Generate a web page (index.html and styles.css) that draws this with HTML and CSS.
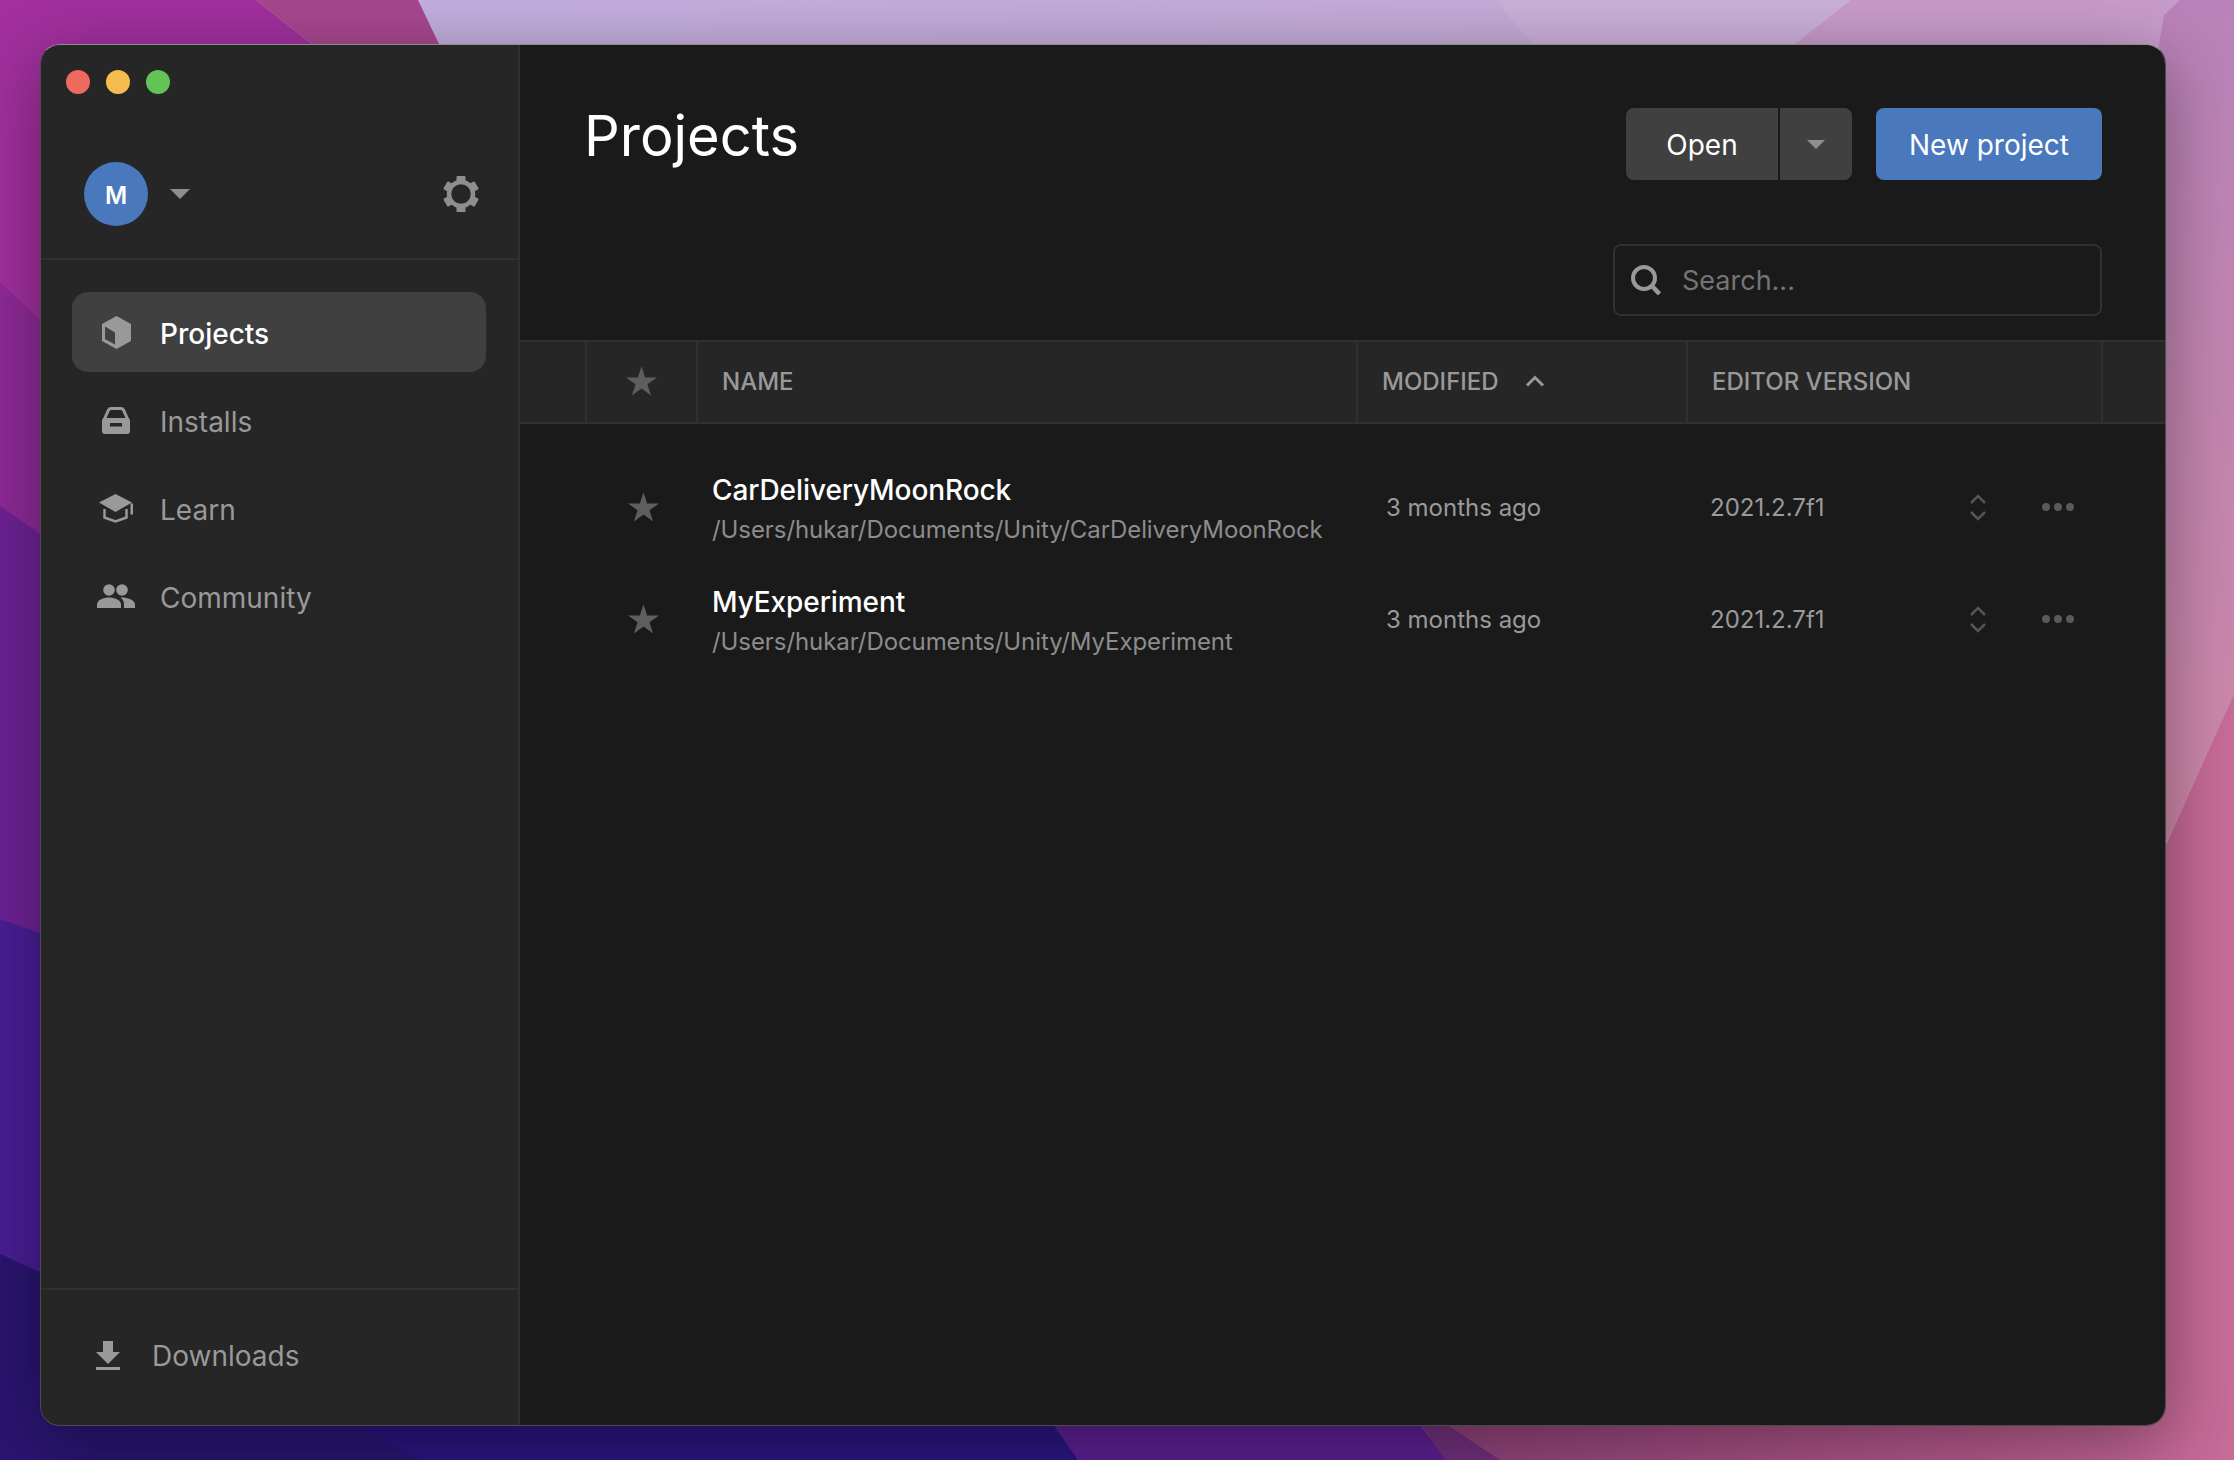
FILE: index.html
```html
<!DOCTYPE html>
<html lang="en">
<head>
    <meta charset="UTF-8">
    <title>Unity Hub</title>
    <link rel="stylesheet" href="styles.css">
</head>
<body>
    <!-- desktop wallpaper -->
    <svg class="wallpaper" viewBox="0 0 2234 1460" preserveAspectRatio="none" aria-hidden="true">
        <defs>
            <linearGradient id="wpLav" x1="0" x2="1" y1="0" y2="0.1"><stop offset="0" stop-color="#c2b0e2"/><stop offset="1" stop-color="#c6a8d2"/></linearGradient>
            <linearGradient id="wpMauve" x1="0" x2="0" y1="0" y2="1"><stop offset="0" stop-color="#b983b9"/><stop offset="1" stop-color="#cf88a8"/></linearGradient>
            <linearGradient id="wpPink" x1="0" x2="1" y1="0" y2="0"><stop offset="0" stop-color="#8c4078"/><stop offset="0.7" stop-color="#b65a8c"/><stop offset="1" stop-color="#c86c98"/></linearGradient>
        </defs>
        <rect width="2234" height="1460" fill="url(#wpLav)"/>
        <polygon points="1496,0 1851,0 1795,44 1532,44" fill="#cbb0d9"/>
        <polygon points="1851,0 2234,0 2234,800 1700,800 1795,44" fill="#c89cca"/>
        <polygon points="2180,0 2234,0 2234,694 2167,843 2100,400 2164,15" fill="url(#wpMauve)"/>
        <polygon points="2234,694 2167,843 1400,1460 2234,1460" fill="url(#wpPink)"/>
        <polygon points="0,0 256,0 312,44 400,400 400,1400 0,1400" fill="#a2309e"/>
        <polygon points="256,0 418,0 439,44 500,400 400,400 312,44" fill="#a8478f"/>
        <polygon points="0,282 40,320 400,700 400,1000 0,1000" fill="#8f2a98"/>
        <polygon points="0,506 40,534 400,800 400,1200 0,1200" fill="#6e2296"/>
        <polygon points="0,919 40,933 400,1100 400,1300 0,1300" fill="#4a1e96"/>
        <polygon points="300,1390 1050,1390 1078,1460 300,1460" fill="#2b1580"/>
        <polygon points="0,1254 40,1272 356,1426 420,1460 0,1460" fill="#2a1572"/>
        <polygon points="1050,1420 1417,1420 1446,1460 1078,1460" fill="#5c2091"/>
        <polygon points="1417,1420 1446,1460 1500,1460 1440,1420" fill="#70307c"/>
    </svg>

    <div class="window">
        <aside class="sidebar">
            <div class="traffic">
                <span class="light light-red"></span>
                <span class="light light-yellow"></span>
                <span class="light light-green"></span>
            </div>

            <div class="profile">
                <div class="avatar">M</div>
                <span class="caret caret-lg"></span>
                <svg class="gear" viewBox="0 0 36 36" aria-hidden="true">
                    <g fill="#8e8e8e">
                        <rect x="13.500" y="0" width="9" height="7" rx="1"/>
                        <rect x="13.500" y="0" width="9" height="7" rx="1" transform="rotate(60 18 18)"/>
                        <rect x="13.500" y="0" width="9" height="7" rx="1" transform="rotate(120 18 18)"/>
                        <rect x="13.500" y="0" width="9" height="7" rx="1" transform="rotate(180 18 18)"/>
                        <rect x="13.500" y="0" width="9" height="7" rx="1" transform="rotate(240 18 18)"/>
                        <rect x="13.500" y="0" width="9" height="7" rx="1" transform="rotate(300 18 18)"/>
                    </g>
                    <circle cx="18" cy="18" r="12" fill="none" stroke="#8e8e8e" stroke-width="4.500"/>
                </svg>
            </div>

            <nav class="nav">
                <a class="nav-item active">
                    <span class="nav-icon">
                        <svg width="29" height="33" viewBox="0 0 29 33" aria-hidden="true">
                            <polygon points="14.500,0 29,8 29,25 14.500,33 0,25 0,8" fill="#999"/>
                            <polygon points="3,10.500 13,16.500 13,28.500 3,23" fill="#404040"/>
                        </svg>
                    </span>
                    <span class="nav-label">Projects</span>
                </a>
                <a class="nav-item">
                    <span class="nav-icon">
                        <svg width="28" height="27" viewBox="0 0 28 27" aria-hidden="true">
                            <path d="M2 13 L6.500 3 Q7.200 1.500 9 1.500 H19 Q20.800 1.500 21.500 3 L26 13" fill="none" stroke="#999" stroke-width="3"/>
                            <rect x="0" y="11" width="28" height="16" rx="3" fill="#999"/>
                            <rect x="8" y="16" width="12" height="3.500" fill="#262626"/>
                        </svg>
                    </span>
                    <span class="nav-label">Installs</span>
                </a>
                <a class="nav-item">
                    <span class="nav-icon">
                        <svg width="34" height="29" viewBox="0 0 34 29" aria-hidden="true">
                            <polygon points="16.500,0 33,8.500 16.500,18 0,8.500" fill="#999"/>
                            <polyline points="5.500,15 5.500,23.500 16.500,27.500 27.500,23.500 27.500,15" fill="none" stroke="#999" stroke-width="2.500"/>
                            <rect x="31.500" y="9.500" width="2.500" height="11" fill="#999"/>
                        </svg>
                    </span>
                    <span class="nav-label">Learn</span>
                </a>
                <a class="nav-item">
                    <span class="nav-icon">
                        <svg width="38" height="24" viewBox="0 0 38 24" aria-hidden="true">
                            <circle cx="12" cy="6" r="5.800" fill="#999"/>
                            <circle cx="25" cy="6" r="5.800" fill="#999"/>
                            <path d="M0 24 V20.500 C0 16 7 13.500 12 13.500 S24 16 24 20.500 V24 Z" fill="#999"/>
                            <path d="M25 13.500 C30 13.500 38 16 38 20.500 V24 H27 V20 C27 17.500 26 15.500 23.500 13.800 Z" fill="#999"/>
                        </svg>
                    </span>
                    <span class="nav-label">Community</span>
                </a>
            </nav>

            <div class="downloads">
                <svg width="24" height="29" viewBox="0 0 24 29" aria-hidden="true">
                    <path d="M7 0 H17 V11 H24 L12 23 L0 11 H7 Z" fill="#999"/>
                    <rect y="26" width="24" height="3" fill="#999"/>
                </svg>
                Downloads
            </div>
        </aside>

        <main class="main">
            <div class="topbar">
                <h1>Projects</h1>
                <div class="actions">
                    <div class="split">
                        <button class="btn btn-open">Open</button>
                        <button class="btn btn-more"><span class="caret"></span></button>
                    </div>
                    <button class="btn btn-primary">New project</button>
                </div>
            </div>

            <div class="search-row">
                <label class="search">
                    <svg width="30" height="30" viewBox="0 0 30 30" aria-hidden="true">
                        <circle cx="13" cy="13" r="11" fill="none" stroke="#999" stroke-width="4"/>
                        <line x1="21" y1="21" x2="28.500" y2="29" stroke="#999" stroke-width="4.500"/>
                    </svg>
                    <input type="text" placeholder="Search...">
                </label>
            </div>

            <div class="thead">
                <div class="th"></div>
                <div class="th th-star">
                    <svg class="star" viewBox="0 0 24 23" aria-hidden="true"><polygon points="12,0 14.800,8.700 24,8.700 16.600,14.100 19.400,22.800 12,17.400 4.600,22.800 7.400,14.100 0,8.700 9.200,8.700"/></svg>
                </div>
                <div class="th">NAME</div>
                <div class="th">MODIFIED
                    <svg class="sort" width="20" height="12" viewBox="0 0 20 12" aria-hidden="true"><polyline points="2,10.500 10,2.500 18,10.500" fill="none" stroke="#999" stroke-width="3"/></svg>
                </div>
                <div class="th">EDITOR VERSION</div>
                <div class="th"></div>
            </div>

            <div class="rows">
                <div class="row">
                    <svg class="star" viewBox="0 0 24 23" aria-hidden="true"><polygon points="12,0 14.800,8.700 24,8.700 16.600,14.100 19.400,22.800 12,17.400 4.600,22.800 7.400,14.100 0,8.700 9.200,8.700"/></svg>
                    <div class="project">
                        <div class="project-name">CarDeliveryMoonRock</div>
                        <div class="project-path">/Users/hukar/Documents/Unity/CarDeliveryMoonRock</div>
                    </div>
                    <div class="cell">3 months ago</div>
                    <div class="cell">2021.2.7f1</div>
                    <div class="row-tools">
                        <svg width="16" height="27" viewBox="0 0 16 27" aria-hidden="true"><path d="M1 9 L8 2 L15 9 M1 18 L8 25 L15 18" fill="none" stroke="#555" stroke-width="2.500"/></svg>
                        <svg width="32" height="8" viewBox="0 0 32 8" aria-hidden="true"><circle cx="4" cy="4" r="4" fill="#5a5a5a"/><circle cx="16" cy="4" r="4" fill="#5a5a5a"/><circle cx="28" cy="4" r="4" fill="#5a5a5a"/></svg>
                    </div>
                </div>
                <div class="row">
                    <svg class="star" viewBox="0 0 24 23" aria-hidden="true"><polygon points="12,0 14.800,8.700 24,8.700 16.600,14.100 19.400,22.800 12,17.400 4.600,22.800 7.400,14.100 0,8.700 9.200,8.700"/></svg>
                    <div class="project">
                        <div class="project-name">MyExperiment</div>
                        <div class="project-path">/Users/hukar/Documents/Unity/MyExperiment</div>
                    </div>
                    <div class="cell">3 months ago</div>
                    <div class="cell">2021.2.7f1</div>
                    <div class="row-tools">
                        <svg width="16" height="27" viewBox="0 0 16 27" aria-hidden="true"><path d="M1 9 L8 2 L15 9 M1 18 L8 25 L15 18" fill="none" stroke="#555" stroke-width="2.500"/></svg>
                        <svg width="32" height="8" viewBox="0 0 32 8" aria-hidden="true"><circle cx="4" cy="4" r="4" fill="#5a5a5a"/><circle cx="16" cy="4" r="4" fill="#5a5a5a"/><circle cx="28" cy="4" r="4" fill="#5a5a5a"/></svg>
                    </div>
                </div>
            </div>
        </main>
    </div>
</body>
</html>
```

FILE: styles.css
```css
:root {
    --side-bg: #262626;
    --main-bg: #1a1a1a;
    --line: #303030;
    --muted: #999;
    --blue: #4a78bd;
    --btn: #404040;
}
html, body {
    margin: 0;
    padding: 0;
    height: 100%;
    overflow: hidden;
    font-family: 'Inter', 'Liberation Sans', sans-serif;
}
body {
    box-sizing: border-box;
    padding: 44px 68px 34px 40px;
    display: flex;
    background: #6e2296;
}
.wallpaper {
    position: absolute;
    left: 0;
    top: 0;
    width: 100%;
    height: 100%;
}

.window {
    position: relative;
    flex: 1;
    display: flex;
    box-sizing: border-box;
    border: 1px solid #4c4c4c;
    border-top-color: #8c8c8c;
    border-radius: 20px;
    overflow: hidden;
    box-shadow: 0 16px 70px rgba(0, 0, 0, .38);
}

/* sidebar */
.sidebar {
    width: 477px;
    flex: none;
    display: flex;
    flex-direction: column;
    background: var(--side-bg);
    border-right: 2px solid var(--line);
}
.traffic {
    display: flex;
    gap: 16px;
    padding: 25px 0 0 25px;
}
.light {
    width: 24px;
    height: 24px;
    border-radius: 50%;
}
.light-red { background: #ee6a5f; }
.light-yellow { background: #f5bd4f; }
.light-green { background: #61c454; }
.profile {
    display: flex;
    align-items: center;
    height: 64px;
    padding: 68px 39px 32px 43px;
    border-bottom: 2px solid var(--line);
}
.avatar {
    width: 64px;
    height: 64px;
    box-sizing: border-box;
    padding-top: 2px;
    border-radius: 50%;
    background: var(--blue);
    color: #fff;
    font-size: 24px;
    font-weight: 600;
    display: flex;
    align-items: center;
    justify-content: center;
}
.caret {
    display: block;
    width: 0;
    height: 0;
    border-left: 9px solid transparent;
    border-right: 9px solid transparent;
    border-top: 9px solid #8e8e8e;
}
.caret-lg {
    border-left-width: 10px;
    border-right-width: 10px;
    border-top-width: 10px;
    margin-left: 22px;
}
.gear {
    width: 36px;
    height: 36px;
    margin-left: auto;
}
.nav {
    flex: 1;
    display: flex;
    flex-direction: column;
    gap: 8px;
    padding: 32px 32px 0 31px;
}
.nav-item {
    display: flex;
    align-items: center;
    height: 80px;
    padding-left: 24px;
    border-radius: 16px;
    font-size: 28px;
    color: var(--muted);
}
.nav-item.active {
    background: var(--btn);
    color: #fff;
    font-weight: 500;
}
.nav-icon {
    width: 40px;
    margin-right: 24px;
    display: flex;
    justify-content: center;
}
.nav-label {
    padding-top: 4px;
}
.downloads {
    height: 137px;
    box-sizing: border-box;
    border-top: 2px solid var(--line);
    padding: 0 0 4px 55px;
    display: flex;
    align-items: center;
    gap: 32px;
    font-size: 28px;
    color: var(--muted);
}

/* main */
.main {
    flex: 1;
    min-width: 0;
    background: var(--main-bg);
}
.topbar {
    display: flex;
    justify-content: space-between;
    align-items: flex-start;
    padding: 63px 63px 0 64px;
}
h1 {
    margin: 0;
    font-size: 56px;
    line-height: 56px;
    font-weight: 400;
    color: #fff;
}
.actions {
    display: flex;
    gap: 24px;
}
.split {
    display: flex;
    gap: 2px;
}
.btn {
    height: 72px;
    border: none;
    padding: 2px 0 0;
    font-family: inherit;
    font-size: 28px;
    color: #fff;
    background: var(--btn);
}
.btn-open {
    width: 152px;
    border-radius: 8px 0 0 8px;
}
.btn-more {
    width: 72px;
    padding: 0;
    display: flex;
    align-items: center;
    justify-content: center;
    border-radius: 0 8px 8px 0;
}
.btn-primary {
    width: 226px;
    border-radius: 8px;
    background: var(--blue);
}
.search-row {
    display: flex;
    justify-content: flex-end;
    padding: 64px 63px 24px 0;
}
.search {
    width: 489px;
    height: 72px;
    box-sizing: border-box;
    border: 2px solid var(--line);
    border-radius: 8px;
    display: flex;
    align-items: center;
    gap: 21px;
    padding-left: 16px;
}
.search input {
    flex: 1;
    min-width: 0;
    background: none;
    border: none;
    outline: none;
    padding: 0;
    font-family: inherit;
    font-size: 27px;
    color: #fff;
}
.search input::placeholder { color: #757575; opacity: 1; }

.thead {
    display: grid;
    grid-template-columns: 65px 111px 660px 330px 415px 1fr;
    height: 84px;
    box-sizing: border-box;
    background: var(--side-bg);
    border-top: 2px solid var(--line);
    border-bottom: 2px solid var(--line);
}
.th {
    display: flex;
    align-items: center;
    gap: 26px;
    padding: 0 0 2px 24px;
    border-left: 2px solid var(--line);
    font-size: 24px;
    font-weight: 500;
    color: var(--muted);
}
.th:first-child { border-left: none; }
.th-star {
    padding-left: 0;
    justify-content: center;
}
.star {
    width: 31px;
    height: 30px;
    fill: #5e5e5e;
}
.rows {
    padding-top: 27px;
}
.row {
    display: grid;
    grid-template-columns: 84px 674px 324px 260px 1fr;
    align-items: center;
    height: 112px;
    padding-left: 108px;
}
.project {
    padding-top: 6px;
}
.project-name {
    font-size: 28px;
    line-height: 36px;
    font-weight: 500;
    letter-spacing: -.08px;
    color: #fff;
}
.project-path {
    margin-top: 4px;
    font-size: 24px;
    line-height: 36px;
    letter-spacing: -.08px;
    color: #8c8c8c;
}
.cell {
    font-size: 24px;
    color: #9a9a9a;
}
.row-tools {
    display: flex;
    align-items: center;
    gap: 56px;
}
```
